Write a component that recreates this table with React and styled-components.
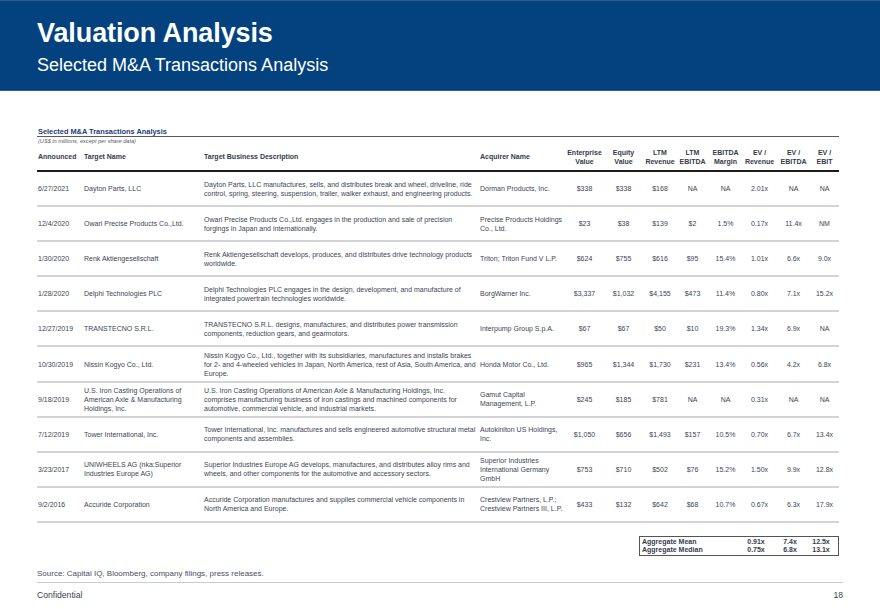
import React from "react";
import styled, { createGlobalStyle } from "styled-components";

const GlobalStyle = createGlobalStyle`
  html, body {
    margin: 0;
    padding: 0;
    background: #ffffff;
  }
  body {
    font-family: "Liberation Sans", Arial, sans-serif;
  }
`;

const COLS = "46px 120px 276px 87px 36px 42px 31px 34px 32px 36px 32px 30px";

const deals = [
  {
    date: "6/27/2021",
    target: "Dayton Parts, LLC",
    desc: "Dayton Parts, LLC manufactures, sells, and distributes break and wheel, driveline, ride control, spring, steering, suspension, trailer, walker exhaust, and engineering products.",
    acquirer: "Dorman Products, Inc.",
    values: ["$338", "$338", "$168", "NA", "NA", "2.01x", "NA", "NA"],
  },
  {
    date: "12/4/2020",
    target: "Owari Precise Products Co.,Ltd.",
    desc: "Owari Precise Products Co.,Ltd. engages in the production and sale of precision forgings in Japan and internationally.",
    acquirer: "Precise Products Holdings Co., Ltd.",
    values: ["$23", "$38", "$139", "$2", "1.5%", "0.17x", "11.4x", "NM"],
  },
  {
    date: "1/30/2020",
    target: "Renk Aktiengesellschaft",
    desc: "Renk Aktiengesellschaft develops, produces, and distributes drive technology products worldwide.",
    acquirer: "Triton; Triton Fund V L.P.",
    values: ["$624", "$755", "$616", "$95", "15.4%", "1.01x", "6.6x", "9.0x"],
  },
  {
    date: "1/28/2020",
    target: "Delphi Technologies PLC",
    desc: "Delphi Technologies PLC engages in the design, development, and manufacture of integrated powertrain technologies worldwide.",
    acquirer: "BorgWarner Inc.",
    values: ["$3,337", "$1,032", "$4,155", "$473", "11.4%", "0.80x", "7.1x", "15.2x"],
  },
  {
    date: "12/27/2019",
    target: "TRANSTECNO S.R.L.",
    desc: "TRANSTECNO S.R.L. designs, manufactures, and distributes power transmission components, reduction gears, and gearmotors.",
    acquirer: "Interpump Group S.p.A.",
    values: ["$67", "$67", "$50", "$10", "19.3%", "1.34x", "6.9x", "NA"],
  },
  {
    date: "10/30/2019",
    target: "Nissin Kogyo Co., Ltd.",
    desc: "Nissin Kogyo Co., Ltd., together with its subsidiaries, manufactures and installs brakes for 2- and 4-wheeled vehicles in Japan, North America, rest of Asia, South America, and Europe.",
    acquirer: "Honda Motor Co., Ltd.",
    values: ["$965", "$1,344", "$1,730", "$231", "13.4%", "0.56x", "4.2x", "6.8x"],
  },
  {
    date: "9/18/2019",
    target: "U.S. Iron Casting Operations of American Axle & Manufacturing Holdings, Inc.",
    desc: "U.S. Iron Casting Operations of American Axle & Manufacturing Holdings, Inc. comprises manufacturing business of iron castings and machined components for automotive, commercial vehicle, and industrial markets.",
    acquirer: "Gamut Capital Management, L.P.",
    values: ["$245", "$185", "$781", "NA", "NA", "0.31x", "NA", "NA"],
  },
  {
    date: "7/12/2019",
    target: "Tower International, Inc.",
    desc: "Tower International, Inc. manufactures and sells engineered automotive structural metal components and assemblies.",
    acquirer: "Autokiniton US Holdings, Inc.",
    values: ["$1,050", "$656", "$1,493", "$157", "10.5%", "0.70x", "6.7x", "13.4x"],
  },
  {
    date: "3/23/2017",
    target: "UNIWHEELS AG (nka:Superior Industries Europe AG)",
    desc: "Superior Industries Europe AG develops, manufactures, and distributes alloy rims and wheels, and other components for the automotive and accessory sectors.",
    acquirer: "Superior Industries International Germany GmbH",
    values: ["$753", "$710", "$502", "$76", "15.2%", "1.50x", "9.9x", "12.8x"],
  },
  {
    date: "9/2/2016",
    target: "Accuride Corporation",
    desc: "Accuride Corporation manufactures and supplies commercial vehicle components in North America and Europe.",
    acquirer: "Crestview Partners, L.P.; Crestview Partners III, L.P.",
    values: ["$433", "$132", "$642", "$68", "10.7%", "0.67x", "6.3x", "17.9x"],
  },
];

const numericHeads = [
  ["Enterprise", "Value"],
  ["Equity", "Value"],
  ["LTM", "Revenue"],
  ["LTM", "EBITDA"],
  ["EBITDA", "Margin"],
  ["EV /", "Revenue"],
  ["EV /", "EBITDA"],
  ["EV /", "EBIT"],
];

const aggregates = [
  { label: "Aggregate Mean", values: ["0.91x", "7.4x", "12.5x"] },
  { label: "Aggregate Median", values: ["0.75x", "6.8x", "13.1x"] },
];

export default function App() {
  return (
    <Page>
      <GlobalStyle />
      <Banner>
        <Title>Valuation Analysis</Title>
        <Subtitle>Selected M&amp;A Transactions Analysis</Subtitle>
      </Banner>

      <Content>
        <TableTitle>Selected M&amp;A Transactions Analysis</TableTitle>
        <Note>(US$ in millions, except per share data)</Note>

        <HeadRow>
          <HeadCell>Announced</HeadCell>
          <HeadCell>Target Name</HeadCell>
          <HeadCell>Target Business Description</HeadCell>
          <HeadCell>Acquirer Name</HeadCell>
          {numericHeads.map(([a, b], i) => (
            <HeadCell key={i} $num>
              {a}
              <br />
              {b}
            </HeadCell>
          ))}
        </HeadRow>

        {deals.map((d) => (
          <Row key={d.date}>
            <Cell>{d.date}</Cell>
            <Cell $wrap={6}>{d.target}</Cell>
            <Cell $wrap={2}>{d.desc}</Cell>
            <Cell $wrap={3.4}>{d.acquirer}</Cell>
            {d.values.map((v, i) => (
              <Cell key={i} $num>
                {v}
              </Cell>
            ))}
          </Row>
        ))}

        <AggregateBox>
          {aggregates.map((a) => (
            <AggregateRow key={a.label}>
              <span>{a.label}</span>
              {a.values.map((v, i) => (
                <AggValue key={i}>{v}</AggValue>
              ))}
            </AggregateRow>
          ))}
        </AggregateBox>

        <Source>Source: Capital IQ, Bloomberg, company filings, press releases.</Source>
      </Content>

      <Footer>
        <span>Confidential</span>
        <span>18</span>
      </Footer>
    </Page>
  );
}

const Page = styled.div`
  width: 880px;
  height: 609px;
  display: flex;
  flex-direction: column;
  overflow: hidden;
`;

const Banner = styled.header`
  height: 91px;
  background: #03427e;
  border-top: 1px solid #2b5d93;
  border-bottom: 1px solid #2b5d93;
  padding: 16px 0 0 37px;
  box-sizing: border-box;
  color: #ffffff;
`;

const Title = styled.h1`
  margin: 0;
  font-size: 27px;
  line-height: 32px;
  font-weight: 700;
  letter-spacing: -0.1px;
`;

const Subtitle = styled.div`
  font-size: 18px;
  line-height: 20px;
  margin-top: 6px;
`;

const Content = styled.main`
  padding: 36px 41px 0 37px;
  display: flex;
  flex-direction: column;
  color: #3d4556;
`;

const TableTitle = styled.div`
  font-size: 7.4px;
  line-height: 9px;
  font-weight: 700;
  color: #1d3b78;
  padding-left: 1px;
  border-bottom: 1px solid #555b66;
`;

const Note = styled.div`
  font-size: 5.6px;
  line-height: 8px;
  font-style: italic;
  color: #555b66;
  padding-left: 1px;
`;

const HeadRow = styled.div`
  display: grid;
  grid-template-columns: ${COLS};
  align-items: center;
  height: 27px;
  box-sizing: border-box;
  border-bottom: 2px solid #1c1c1c;
`;

const HeadCell = styled.div`
  font-size: 7px;
  line-height: 9px;
  font-weight: 700;
  color: #353c4a;
  padding-left: 1px;
  white-space: nowrap;
  text-align: ${(p) => (p.$num ? "center" : "left")};
  padding-bottom: 2px;
`;

const Row = styled.div`
  display: grid;
  grid-template-columns: ${COLS};
  align-items: center;
  height: 35.1px;
  box-sizing: border-box;
  border-bottom: 2px solid #d4d4d6;
`;

const Cell = styled.div`
  font-size: 7px;
  line-height: 9px;
  padding-left: 1px;
  padding-right: ${(p) => (p.$wrap ? `${p.$wrap}px` : "0")};
  white-space: ${(p) => (p.$wrap ? "normal" : "nowrap")};
  text-align: ${(p) => (p.$num ? "center" : "left")};
`;

const AggregateBox = styled.div`
  align-self: flex-end;
  width: 200px;
  margin-top: 13px;
  border: 1px solid #555;
  box-sizing: border-box;
  padding: 1px 2px;
`;

const AggregateRow = styled.div`
  display: grid;
  grid-template-columns: 1fr 36px 32px 30px;
  font-size: 7px;
  line-height: 8px;
  font-weight: 700;
  color: #353c4a;
`;

const AggValue = styled.span`
  text-align: center;
`;

const Source = styled.div`
  margin-top: 13px;
  font-size: 8px;
  line-height: 10px;
  color: #4a5060;
`;

const Footer = styled.footer`
  margin: 3px 37px 0 37px;
  border-top: 1px solid #c7ccd6;
  padding-top: 7px;
  display: flex;
  justify-content: space-between;
  font-size: 8.6px;
  line-height: 11px;
  color: #3d4350;
`;
